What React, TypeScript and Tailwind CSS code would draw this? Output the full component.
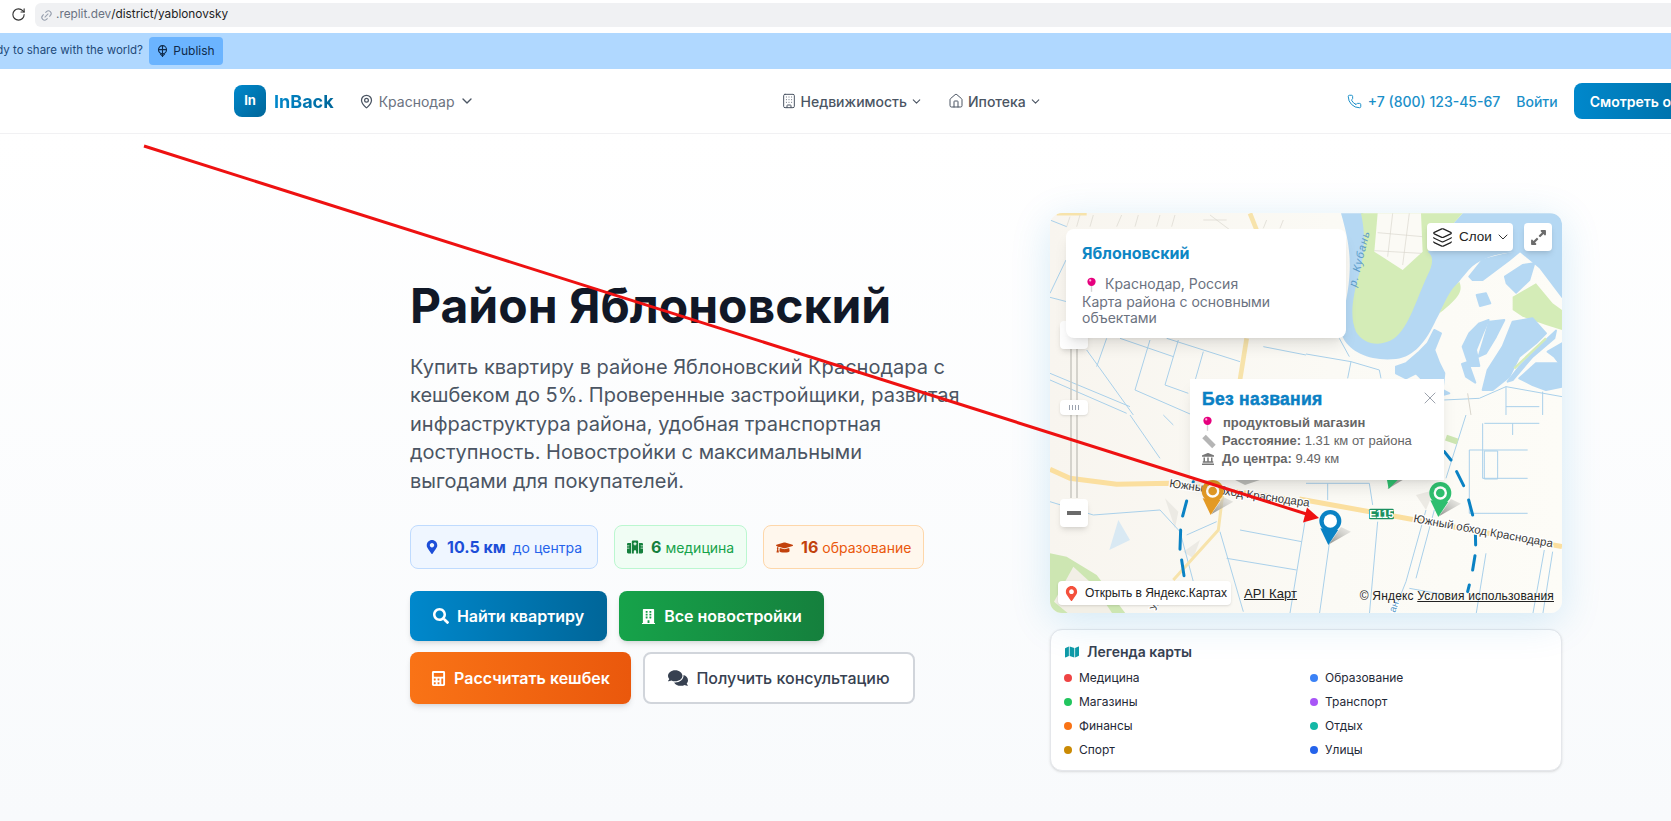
import { ChevronDown, Building, Home, Layers, Link2, MapPin, Phone, RotateCw, X } from "lucide-react";
import {
  FaBuilding,
  FaCalculator,
  FaComments,
  FaExpandAlt,
  FaGraduationCap,
  FaLandmark,
  FaMap,
  FaMapMarkerAlt,
  FaSearch,
} from "react-icons/fa";
import { FaHospital } from "react-icons/fa6";

const legend = [
  { name: "Медицина", color: "bg-[#ef4444]" },
  { name: "Образование", color: "bg-[#3b82f6]" },
  { name: "Магазины", color: "bg-[#22c55e]" },
  { name: "Транспорт", color: "bg-[#a855f7]" },
  { name: "Финансы", color: "bg-[#f97316]" },
  { name: "Отдых", color: "bg-[#14b8a6]" },
  { name: "Спорт", color: "bg-[#ca8a04]" },
  { name: "Улицы", color: "bg-[#2563eb]" },
];

// thin blue lines of the map, in 3x crop coordinates of each quadrant
const nwLines = [
  "M110 420L250 615",
  "M210 385L370 440",
  "M0 490L240 590",
  "M0 510L230 610",
  "M300 390L255 540L420 612",
  "M385 390L345 525L415 550",
  "M350 385L570 455",
  "M460 425L430 530",
  "M640 410L768 435",
  "M170 385L140 470",
  "M0 262L50 275",
  "M48 150L0 250",
  "M0 30L50 50",
];
const neLines = [
  "M0 432L135 455L220 480L225 505",
  "M135 455L125 505",
  "M100 385L130 440",
  "M415 570L520 565L600 530L768 560",
  "M600 530L600 615",
  "M710 545L710 615",
  "M600 590L700 590",
];
const swLines = [
  "M240 0L330 130",
  "M340 0L370 30",
  "M0 260L130 300L330 285L390 350L430 500",
  "M570 345L755 380",
  "M530 430L740 465",
  "M510 350L580 590",
  "M765 320L720 595",
  "M410 360L500 320",
];
const seLines = [
  "M535 25L700 25",
  "M530 25L530 190L665 190",
  "M490 105L665 105",
  "M490 105L490 295L665 295",
  "M535 108L575 108L575 192L535 192Z",
  "M620 25L620 60",
  "M70 385L40 600",
  "M215 320L190 600",
  "M360 285L300 500L260 600",
  "M385 285L330 490",
  "M540 415L510 600",
  "M715 405L680 600",
  "M740 410L710 600",
  "M310 520L420 540",
  "M0 205L190 205L200 270",
  "M65 205L65 255",
  "M480 0L420 190",
];
const lakes = [
  "M270 470L300 460L340 425L365 400L385 360L405 370L385 420L400 460L415 490L410 540L430 550L410 555L380 535L350 510L330 490L300 505L270 490Z",
  "M470 410L490 370L520 340L548 330L530 370L510 420L520 468L490 468L480 440Z",
  "M550 335L595 330L570 380L540 430L518 440Z",
  "M620 335L680 325L720 370L690 400L640 440L610 500L560 540L530 540L545 480L590 410Z",
  "M640 505L690 460L768 460V530L720 540L680 525Z",
  "M725 425L768 400V470L745 440Z",
  "M468 462L486 456L508 518L480 500Z",
  "M490 200L530 150L590 135L640 125L610 150L570 180L530 210L500 210Z",
  "M597 200L650 165L685 160L670 210L630 248L602 220Z",
  "M512 255L540 250L553 280L522 288Z",
  "M605 515L640 470L720 390L750 362L745 385L680 440L620 510Z",
];

function Pin({ x, y, color, dot }: { x: number; y: number; color: string; dot?: boolean }) {
  return (
    <g transform={`translate(${x} ${y})`}>
      <path d="M-4 70L32 18L62 32Z" fill="url(#pinShadow)" />
      <path d="M-30 22L-6 72L24 26Z" fill={color} />
      <circle r="33" fill={color} />
      <circle r="20" fill="#ffffff" />
      {dot && <circle r="13" fill={color} />}
    </g>
  );
}

function YandexMap() {
  return (
    <svg viewBox="0 0 512 400" className="absolute inset-0 h-full w-full">
      <defs>
        <linearGradient id="mapLand" x1="0" x2="1" y1="0" y2="0">
          <stop offset="0" stopColor="#f8f5ef" />
          <stop offset="0.55" stopColor="#fbfaf5" />
          <stop offset="1" stopColor="#fdfcf7" />
        </linearGradient>
        <linearGradient id="pinShadow" x1="0" x2="1" y1="1" y2="0">
          <stop offset="0" stopColor="#8d8d89" />
          <stop offset="1" stopColor="#d8d8d4" stopOpacity="0.4" />
        </linearGradient>
      </defs>
      <rect width="512" height="400" fill="url(#mapLand)" />

      {/* north west */}
      <g transform="translate(0 -3) scale(0.3333)" fill="none">
        <path d="M20 12H110" stroke="#f7e3ab" strokeWidth="9" />
        <path d="M600 10L620 60" stroke="#f7e3ab" strokeWidth="14" />
        <path d="M590 385L570 510" stroke="#f7e3ab" strokeWidth="14" />
        <path d="M60 20L50 50M90 15L80 50M130 15L120 50M215 15L200 50M265 15L255 50M330 15L320 50M375 15L365 50M480 15L540 60M460 30L530 30M650 30L640 55M700 30L690 55" stroke="#d9d6cd" strokeWidth="2" />
        {nwLines.map((d) => (
          <path key={d} d={d} stroke="#a9d0ea" strokeWidth="3" />
        ))}
      </g>

      {/* north east: river, lakes, park */}
      <g transform="translate(256 -3) scale(0.3333)">
        <path
          d="M105 10C125 80 135 130 130 200C125 280 95 350 112 385C135 430 200 455 270 447C325 440 360 395 390 330C420 275 440 235 480 190C510 150 560 130 640 125L700 175L768 265V10H470L365 125L170 10Z"
          fill="#b5d8f3"
        />
        <path
          d="M165 10C180 80 175 130 160 190C140 260 130 320 150 365C170 400 220 415 265 385C310 350 330 270 365 195C380 165 385 140 365 125L470 10H165Z"
          fill="#d4ecb7"
        />
        <path d="M215 10H345L350 125L290 180L205 125Z" fill="#fbfaf5" />
        <path d="M215 68L350 80M205 122L345 130M260 10L245 140M310 10L290 165" stroke="#d9d6cd" strokeWidth="2" fill="none" />
        <path d="M460 215C470 240 465 260 400 310C420 270 430 240 460 215Z" fill="#d4ecb7" />
        <path d="M620 260L690 220L740 280L768 300V360L720 345L650 320L620 300Z" fill="#d4ecb7" />
        {lakes.map((d) => (
          <path key={d} d={d} fill="#b5d8f3" stroke="#b5d8f3" strokeWidth="6" strokeLinejoin="round" />
        ))}
        <path d="M625 475L720 385" stroke="#d4ecb7" strokeWidth="7" />
        {neLines.map((d) => (
          <path key={d} d={d} stroke="#a9d0ea" strokeWidth="3" fill="none" />
        ))}
        <path d="M485 550L495 615" stroke="#d9d6cd" strokeWidth="3" fill="none" />
        <text
          transform="translate(150 232) rotate(-76)"
          className="font-['Liberation_Sans',Arial,sans-serif]"
          fontSize="33"
          fontStyle="italic"
          fill="#5b9bc9"
          letterSpacing="3"
        >
          р. Кубань
        </text>
      </g>

      {/* south west */}
      <g transform="translate(0 202) scale(0.3333)" fill="none">
        <path d="M0 415L50 425L140 480L230 600H0Z" fill="#cde6b2" stroke="none" />
        <path d="M70 455L130 510L190 600H60L12 560Z" fill="#f2efe6" stroke="none" />
        <path d="M205 315L240 375L178 405Z" fill="#d9e9f3" stroke="none" />
        <path d="M345 250L385 290L375 340Z" fill="#eceae4" stroke="none" />
        <path d="M400 410L450 375L430 430Z" fill="#eceae4" stroke="none" />
        {swLines.map((d) => (
          <path key={d} d={d} stroke="#a9d0ea" strokeWidth="3" />
        ))}
        <path d="M518 240L505 345L370 495" stroke="#f7e3ab" strokeWidth="9" />
        <path d="M0 163L60 190L200 208L360 205L520 225L768 260" stroke="#fbdf9f" strokeWidth="15" />
        <path d="M430 200L425 218M410 258L398 303M392 345L390 403M395 435L402 482" stroke="#0a82c4" strokeWidth="9" strokeLinecap="round" />
        <path d="M545 190L585 210L645 190Z" fill="#bdbdb9" stroke="none" />
      </g>

      {/* south east */}
      <g transform="translate(256 202) scale(0.3333)" fill="none">
        {seLines.map((d) => (
          <path key={d} d={d} stroke="#a9d0ea" strokeWidth="3" />
        ))}
        <path d="M420 68L455 80" stroke="#cde6b2" strokeWidth="18" />
        <path d="M-20 252L300 310L768 395" stroke="#fbdf9f" strokeWidth="15" />
        <path d="M415 110L435 135M452 170L473 212M488 255L500 300M508 345L509 390M507 422L500 465M490 510L485 530" stroke="#0a82c4" strokeWidth="9" strokeLinecap="round" />
        <path d="M330 240L385 225L360 285Z" fill="#eceae4" stroke="none" />
        <rect x="189" y="281" width="75" height="32" rx="5" fill="#1a9060" />
        <path d="M245 222L258 195L290 195Z" fill="#a8a8a4" stroke="none" />
        <path d="M243 195L248 222L275 195Z" fill="#2fbf6f" stroke="none" />
      </g>

      <g className="font-['Liberation_Sans',Arial,sans-serif]" fontSize="11.5" fill="#3a3a3a" stroke="#ffffff" strokeWidth="2.5" paintOrder="stroke">
        <text transform="translate(119 274) rotate(8)">Южный обход Краснодара</text>
        <text transform="translate(363 309) rotate(10.3)">Южный обход Краснодара</text>
        <text transform="translate(106 398) rotate(-70)" fontSize="10">Ул</text>
        <text transform="translate(345 400) rotate(-70)" fontSize="10" fill="#5b9bc9">ан</text>
      </g>
      <text x="331.5" y="305" textAnchor="middle" className="font-['Liberation_Sans',Arial,sans-serif]" fontSize="11" fontWeight="700" fill="#ffffff">
        E115
      </text>

      <g transform="translate(0 202) scale(0.3333)">
        <Pin x={488} y={228} color="#e39a25" dot />
      </g>
      <g transform="translate(256 202) scale(0.3333)">
        <Pin x={73} y={318} color="#0a82c4" />
        <Pin x={403} y={234} color="#2fbf6f" dot />
      </g>

      {/* zoom slider track */}
      <path d="M21 130V285M27 130V285" stroke="#c9c7c1" strokeWidth="1.5" />
    </svg>
  );
}

function SmallPin({ className }: { className?: string }) {
  return (
    <svg viewBox="0 0 12 16" className={className}>
      <path d="M6 7V16" stroke="#d4d4d4" strokeWidth="1.5" />
      <circle cx="6" cy="5" r="4.5" fill="#e6007e" />
      <circle cx="4.6" cy="3.6" r="1.2" fill="#ffb3dc" />
    </svg>
  );
}

function MapCard() {
  return (
    <div className="relative h-[400px] w-full overflow-hidden rounded-xl shadow-[0_8px_40px_rgba(0,136,204,0.16)]">
      <YandexMap />

      {/* zoom controls */}
      <div className="absolute left-[10px] top-[108px] h-[28px] w-[28px] rounded bg-white shadow-md" />
      <div className="absolute left-[10px] top-[187px] flex h-[15px] w-[28px] items-center justify-center rounded bg-white shadow-sm">
        <div className="h-[5px] w-[11px] [background:repeating-linear-gradient(90deg,#9ca3af_0_1px,transparent_1px_3px)]" />
      </div>
      <div className="absolute left-[10px] top-[286px] flex h-[28px] w-[28px] items-center justify-center rounded bg-white shadow-md">
        <div className="h-[4px] w-[14px] bg-[#6b6b6b]" />
      </div>

      {/* layers and fullscreen */}
      <div className="absolute left-[377px] top-[10px] flex h-[28px] w-[86px] items-center gap-[6px] rounded bg-white pl-[5px] font-['Liberation_Sans',Arial,sans-serif] text-[13.5px] text-[#222] shadow-md">
        <Layers size={21} strokeWidth={1.4} />
        <span>Слои</span>
        <ChevronDown size={16} strokeWidth={1.4} className="-ml-[3px]" />
      </div>
      <div className="absolute left-[474px] top-[10px] flex h-[28px] w-[28px] items-center justify-center rounded bg-white text-[#6b6b6b] shadow-md">
        <FaExpandAlt size={17} />
      </div>

      {/* district card */}
      <div className="absolute left-4 top-4 h-[109px] w-[280px] rounded-lg bg-white p-4 shadow-lg">
        <div className="text-[16px] font-bold leading-[16px] text-[#0e86c4]">Яблоновский</div>
        <div className="mt-[15px] flex items-center text-[14px] leading-[16px] text-[#6b7280]">
          <SmallPin className="ml-[4px] mr-[8px] h-[15px] w-[11px]" />
          Краснодар, Россия
        </div>
        <div className="mt-[2px] text-[14px] leading-[16px] text-[#6b7280]">Карта района с основными объектами</div>
      </div>

      {/* balloon */}
      <div className="absolute left-[140px] top-[166px] h-[101px] w-[254px] bg-white px-3 pt-[10px] font-['Liberation_Sans',Arial,sans-serif] text-[13px] leading-[18px] text-[#666] shadow-lg">
        <X size={20} strokeWidth={0.8} className="absolute right-[4px] top-[9px] text-gray-500" />
        <div className="text-[17.5px] font-bold leading-[20px] tracking-[0.3px] text-[#0a80c4] [-webkit-text-stroke:0.5px_#0a80c4]">Без названия</div>
        <div className="mt-[5px] flex items-center font-bold">
          <SmallPin className="mr-[10px] h-[15px] w-[11px]" />
          продуктовый магазин
        </div>
        <div className="flex items-center">
          <span className="mr-[6px] h-[5px] w-[14px] rotate-45 bg-[#b5b5b5]" />
          <b>Расстояние:</b>&nbsp;1.31 км от района
        </div>
        <div className="flex items-center">
          <FaLandmark size={12} className="mr-[8px] text-[#777]" />
          <b>До центра:</b>&nbsp;9.49 км
        </div>
      </div>

      {/* attribution */}
      <div className="absolute bottom-[8px] left-[8px] flex h-[24px] w-[173px] items-center gap-[6px] rounded-sm bg-white pl-[6px] font-['Liberation_Sans',Arial,sans-serif] text-[12px] text-[#222] shadow-sm">
        <FaMapMarkerAlt size={15} className="text-[#f4503c]" />
        Открыть в Яндекс.Картах
      </div>
      <div className="absolute bottom-[11px] left-[194px] font-['Liberation_Sans',Arial,sans-serif] text-[13px] leading-[16px] tracking-[0.1px] text-[#222] underline">
        API Карт
      </div>
      <div className="absolute bottom-[9px] right-[8px] whitespace-nowrap font-['Liberation_Sans',Arial,sans-serif] text-[12px] leading-[16px] tracking-[0.17px] text-[#222]">
        © Яндекс <span className="underline">Условия использования</span>
      </div>
    </div>
  );
}

export default function App() {
  return (
    <div className="relative h-[821px] w-[1671px] overflow-hidden bg-white font-['Inter',sans-serif]">
      {/* browser bar */}
      <div className="flex h-[33px] items-start bg-white pl-[11px] pt-[3px]">
        <RotateCw size={15} strokeWidth={1.8} className="mt-[4px] text-[#333]" />
        <div className="ml-[9px] flex h-[24px] flex-1 items-center gap-[3px] rounded-l-md bg-[#f0f1f3] pl-[5px] text-[11.8px]">
          <Link2 size={13} className="-rotate-45 text-gray-400" />
          <span className="text-gray-500">.replit.dev</span>
          <span className="-ml-[3px] text-[#222]">/district/yablonovsky</span>
        </div>
      </div>

      {/* publish banner */}
      <div className="flex h-[36px] items-center bg-[#b0d8ff]">
        <div className="flex w-[143px] justify-end overflow-hidden">
          <span className="whitespace-nowrap text-[11.5px] text-[#1e4a7a]">Ready to share with the world?</span>
        </div>
        <button className="ml-[6px] flex h-[28px] w-[74px] items-center justify-center gap-[5px] rounded bg-[#6bb4ff] text-[12px] text-[#0f2a4a]">
          <svg viewBox="0 0 12 14" className="h-[13px] w-[11px]" fill="none" stroke="#0f2a4a" strokeWidth="1.2">
            <circle cx="6" cy="5" r="4.4" />
            <path d="M1.6 5H10.4M6 .6V13M3.5 9.5L6 12L8.5 9.5" />
          </svg>
          Publish
        </button>
      </div>

      {/* site header */}
      <header className="flex h-[65px] items-center border-b border-[#f1f1f3] bg-white pl-[234px]">
        <div className="flex h-8 w-8 shrink-0 items-center justify-center rounded-lg bg-gradient-to-br from-[#0088cc] to-[#006699] text-[13px] font-bold text-white">
          In
        </div>
        <span className="ml-2 bg-gradient-to-r from-[#0088cc] to-[#006699] bg-clip-text text-[18px] font-bold text-transparent">InBack</span>
        <div className="ml-[25px] flex items-center gap-[5px] text-[14px] text-[#6b7280]">
          <MapPin size={15} className="text-[#4b5563]" />
          Краснодар
          <ChevronDown size={16} className="-ml-[1px] text-[#4b5563]" />
        </div>
        <nav className="ml-[306px] flex items-center text-[14px] font-medium text-[#4b5563]">
          <Building size={16} strokeWidth={1.5} />
          <span className="ml-[4px]">Недвижимость</span>
          <ChevronDown size={13} className="ml-[3px]" />
          <Home size={16} strokeWidth={1.5} className="ml-[25px]" />
          <span className="ml-[4px]">Ипотека</span>
          <ChevronDown size={13} className="ml-[3px]" />
        </nav>
        <div className="ml-[305px] flex items-center gap-[6px] text-[14px] font-medium text-[#1a8fc9]">
          <Phone size={15} strokeWidth={1.6} />
          <span className="whitespace-nowrap">+7 (800) 123-45-67</span>
          <span className="ml-[10px]">Войти</span>
        </div>
        <button className="ml-[16px] h-[36px] shrink-0 whitespace-nowrap rounded-lg bg-gradient-to-r from-[#0088cc] to-[#006699] px-4 text-[14px] font-semibold text-white">
          Смотреть объекты
        </button>
      </header>

      {/* hero */}
      <main className="flex h-[687px] bg-gradient-to-b from-white to-[#f8fafc] pl-[410px] pt-[79px]">
        <section className="w-[550px] pt-[65px]">
          <h1 className="text-[48px] font-bold leading-[56px] text-[#111827]">Район Яблоновский</h1>
          <p className="mt-[19px] text-[20px] leading-[28.4px] text-[#4b5563]">
            Купить квартиру в районе Яблоновский Краснодара с кешбеком до 5%. Проверенные застройщики, развитая инфраструктура района, удобная транспортная доступность. Новостройки с максимальными выгодами для покупателей.
          </p>

          <div className="mt-[30px] flex gap-4">
            <div className="flex h-[44px] w-[188px] items-center gap-2 rounded-lg border border-[#bfdbfe] bg-[#eff6ff] pl-[14px] text-[14px] text-[#2563eb]">
              <FaMapMarkerAlt size={14} className="text-[#1d4ed8]" />
              <b className="text-[16px] text-[#1d4ed8]">10.5 км</b>
              <span className="-ml-[1px]">до центра</span>
            </div>
            <div className="flex h-[44px] w-[133px] items-center gap-[6px] rounded-lg border border-[#bbf7d0] bg-[#f0fdf4] pl-[12px] text-[14px] text-[#16a34a]">
              <FaHospital size={16} className="text-[#15803d]" />
              <b className="ml-[2px] text-[16px] text-[#15803d]">6</b>
              <span className="-ml-[2px]">медицина</span>
            </div>
            <div className="flex h-[44px] w-[161px] items-center gap-[6px] rounded-lg border border-[#fed7aa] bg-[#fff7ed] pl-[12px] text-[14px] text-[#ea580c]">
              <FaGraduationCap size={17} className="text-[#c2410c]" />
              <b className="ml-[2px] text-[16px] text-[#c2410c]">16</b>
              <span className="-ml-[2px]">образование</span>
            </div>
          </div>

          <div className="mt-[22px] flex gap-3">
            <button className="flex h-[50px] w-[197px] items-center justify-center gap-2 rounded-lg bg-gradient-to-r from-[#0088cc] to-[#006699] text-[16px] font-semibold text-white shadow-md">
              <FaSearch size={16} />
              Найти квартиру
            </button>
            <button className="flex h-[50px] w-[205px] items-center justify-center gap-2 rounded-lg bg-gradient-to-r from-[#16a34a] to-[#15803d] text-[16px] font-semibold text-white shadow-md">
              <FaBuilding size={15} />
              Все новостройки
            </button>
          </div>
          <div className="mt-[11px] flex gap-3">
            <button className="flex h-[52px] w-[221px] items-center justify-center gap-2 rounded-lg bg-gradient-to-r from-[#f97316] to-[#ea580c] text-[16px] font-semibold text-white shadow-md">
              <FaCalculator size={15} />
              Рассчитать кешбек
            </button>
            <button className="flex h-[52px] w-[272px] items-center justify-center gap-2 rounded-lg border-2 border-[#d1d5db] bg-white text-[16px] font-medium text-[#374151]">
              <FaComments size={20} />
              Получить консультацию
            </button>
          </div>
        </section>

        <aside className="ml-[90px] w-[512px]">
          <MapCard />
          <div className="mt-4 rounded-xl border border-[#e5e7eb] bg-white py-3 pl-[13px] pr-4 shadow-sm">
            <div className="mb-2 ml-[1px] flex items-center gap-2 text-[14px] font-semibold leading-5 text-[#374151]">
              <FaMap size={14} className="text-[#0e9aa7]" />
              Легенда карты
            </div>
            <div className="grid w-[476px] grid-cols-2 gap-x-4 gap-y-2">
              {legend.map((item) => (
                <div key={item.name} className="flex items-center gap-[7px] text-[12px] leading-4 text-[#1f2937]">
                  <span className={`h-2 w-2 rounded-full ${item.color}`} />
                  {item.name}
                </div>
              ))}
            </div>
          </div>
        </aside>
      </main>

      {/* red annotation arrow drawn on top of the screenshot */}
      <svg className="pointer-events-none absolute inset-0 h-full w-full" viewBox="0 0 1671 821">
        <path d="M144 146L1308 514.5" stroke="#ee1111" strokeWidth="3" />
        <path d="M1319 518L1303 522.5L1307 507.5Z" fill="#ee1111" />
      </svg>
    </div>
  );
}
